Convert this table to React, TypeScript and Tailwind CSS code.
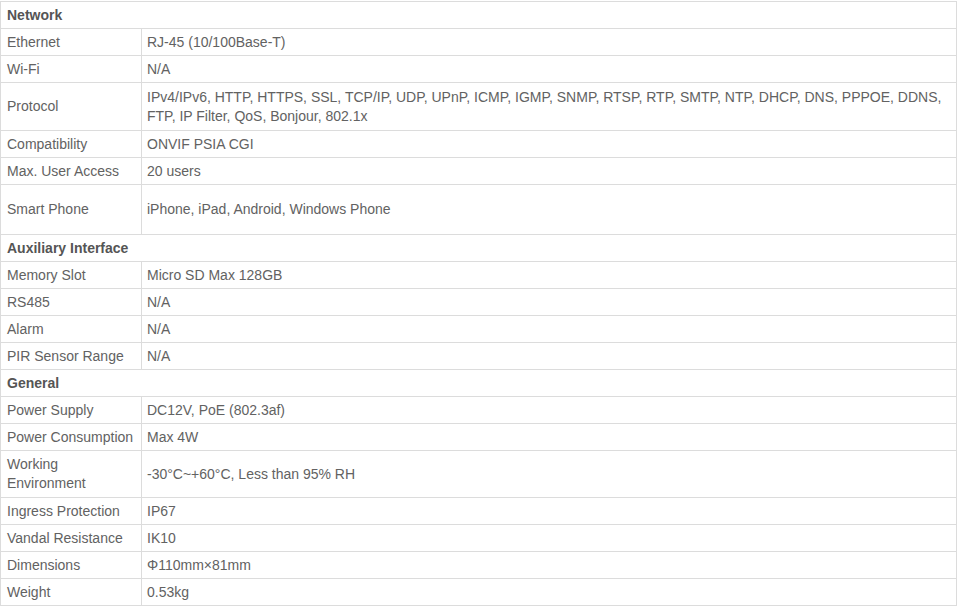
import React from "react";

type Row =
  | { kind: "head"; label: string }
  | { kind: "row"; label: React.ReactNode; value: React.ReactNode; h: string };

const rows: Row[] = [
  { kind: "head", label: "Network" },
  { kind: "row", label: "Ethernet", value: "RJ-45 (10/100Base-T)", h: "h-[27px]" },
  { kind: "row", label: "Wi-Fi", value: "N/A", h: "h-[27px]" },
  {
    kind: "row",
    label: "Protocol",
    value:
      "IPv4/IPv6, HTTP, HTTPS, SSL, TCP/IP, UDP, UPnP, ICMP, IGMP, SNMP, RTSP, RTP, SMTP, NTP, DHCP, DNS, PPPOE, DDNS, FTP, IP Filter, QoS, Bonjour, 802.1x",
    h: "h-[48px]",
  },
  { kind: "row", label: "Compatibility", value: "ONVIF PSIA CGI", h: "h-[27px]" },
  { kind: "row", label: "Max. User Access", value: "20 users", h: "h-[27px]" },
  { kind: "row", label: "Smart Phone", value: "iPhone, iPad, Android, Windows Phone", h: "h-[50px]" },
  { kind: "head", label: "Auxiliary Interface" },
  { kind: "row", label: "Memory Slot", value: "Micro SD Max 128GB", h: "h-[27px]" },
  { kind: "row", label: "RS485", value: "N/A", h: "h-[27px]" },
  { kind: "row", label: "Alarm", value: "N/A", h: "h-[27px]" },
  { kind: "row", label: "PIR Sensor Range", value: "N/A", h: "h-[27px]" },
  { kind: "head", label: "General" },
  { kind: "row", label: "Power Supply", value: "DC12V, PoE (802.3af)", h: "h-[27px]" },
  { kind: "row", label: "Power Consumption", value: "Max 4W", h: "h-[27px]" },
  {
    kind: "row",
    label: (
      <>
        Working
        <br />
        Environment
      </>
    ),
    value: "-30°C~+60°C, Less than 95% RH",
    h: "h-[47px]",
  },
  { kind: "row", label: "Ingress Protection", value: "IP67", h: "h-[27px]" },
  { kind: "row", label: "Vandal Resistance", value: "IK10", h: "h-[27px]" },
  { kind: "row", label: "Dimensions", value: "Φ110mm×81mm", h: "h-[27px]" },
  { kind: "row", label: "Weight", value: "0.53kg", h: "h-[27px]" },
];

export default function App() {
  return (
    <div className="w-[960px] h-[607px] bg-white overflow-hidden pt-px">
      <div
        className="w-[957px] border-t border-l border-r border-[#dcdcdc] text-[14px] leading-[19px] text-[#626262]"
        style={{ fontFamily: '"Liberation Sans", Arial, sans-serif' }}
      >
        {rows.map((r, i) =>
          r.kind === "head" ? (
            <div
              key={i}
              className="h-[27px] flex items-center border-b border-[#dcdcdc] px-[6px] font-bold text-[#555555]"
            >
              {r.label}
            </div>
          ) : (
            <div key={i} className={`${r.h} flex border-b border-[#dcdcdc]`}>
              <div className="w-[141px] shrink-0 flex items-center px-[6px] border-r border-[#dcdcdc]">
                <span>{r.label}</span>
              </div>
              <div className="flex-1 flex items-center pl-[5px] pr-[4px]">
                <span>{r.value}</span>
              </div>
            </div>
          )
        )}
      </div>
    </div>
  );
}
